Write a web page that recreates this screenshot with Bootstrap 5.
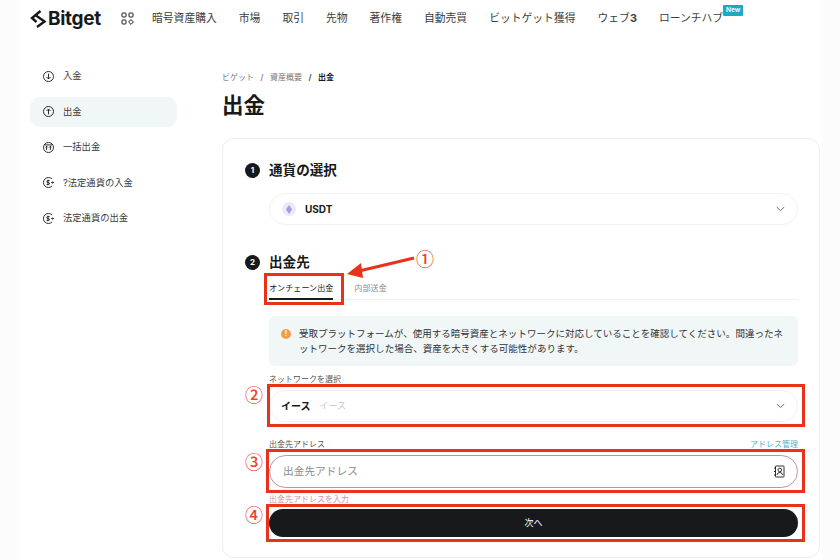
<!DOCTYPE html>
<html lang="ja">
<head>
<meta charset="utf-8">
<title>出金</title>
<link href="https://cdn.jsdelivr.net/npm/bootstrap@5.3.0/dist/css/bootstrap.min.css" rel="stylesheet">
<style>
html,body{height:560px;overflow:hidden}
body{background:#fcfcfc;color:#17191a;font-family:Inter,"Noto Sans CJK JP","Noto Sans",sans-serif;font-size:10px}
.page-frame{position:relative;width:804px;height:560px;margin-left:18px;background:#fff}
.top-bar{height:36px;padding:1px 0 0 12px;flex-wrap:nowrap;justify-content:flex-start}
.logo-wrap{display:flex;align-items:center;gap:1px;width:91px}
.logo-word{font-size:19px;font-weight:700;letter-spacing:-.3px;line-height:24px;color:#17191a}
.top-grid{margin-right:18px}
.top-links{gap:22px;flex-wrap:nowrap;position:relative}
.top-links .nav-link{padding:0;font-size:10.8px;line-height:14px;color:#3a3d40;white-space:nowrap;position:relative}
.new-tag{position:absolute;left:100%;top:-7px;width:20px;height:11px;background:#1fa8c4;color:#e8f7fa;font-size:6.5px;font-weight:700;line-height:11px;text-align:center;border-radius:1px}
.side-col{width:147px;margin:25px 0 0 12px;gap:5.5px}
.side-item{height:30px;padding:0 0 0 13px;gap:9px;border-radius:10px;font-size:9.3px;color:#3a3d40;white-space:nowrap}
.side-item.current{background:#f1f6f6}
.main-col{width:598px;margin-left:45px}
.crumbs{margin:35px 0 0;font-size:8px;line-height:12px;color:#777;--bs-breadcrumb-divider-color:#555;--bs-breadcrumb-item-padding-x:6.5px}
.crumbs .breadcrumb-item.active{color:#17191a;font-weight:700}
.page-head{font-size:21.5px;font-weight:700;line-height:28px;margin:8px 0 19px;color:#17191a}
.panel{height:420px;border:1px solid #eeeeee;border-radius:12px;padding:21px 21px 0 22px}
.step-row{height:20px;gap:9px;font-size:13.6px;font-weight:700;line-height:20px}
.step-dot{width:15px;height:15px;border-radius:50%;background:#17191a;color:#fff;font-size:8px;font-weight:700;line-height:15px;text-align:center}
.indent{margin-left:24px}
.pick-box{height:32px;border:1px solid #f1f1f1;border-radius:16px;padding:0 12px 0 11px;background:#fff}
.coin-dot{width:14px;height:14px;border-radius:50%;background:#ece9f8;margin:0 9px 0 1px}
.pick-name{font-size:10px;font-weight:700;color:#17191a}
.pick-sub{font-size:9px;color:#c4c6c8;margin-left:9px}
.gap-a{margin-top:13px}.gap-b{margin-top:27px}
.tab-row{height:28px;border-bottom:1px solid #f0f0f0;gap:21px;flex-wrap:nowrap}
.tab-row .nav-link{padding:10px 0 4px;font-size:8.1px;line-height:12px;color:#8a8d90;height:28px;border-radius:0}
.tab-row .nav-link.active{color:#17191a;border-bottom:2px solid #17191a}
.tip-box{margin:16px 0 0;height:50px;padding:10px 12px;gap:8px;background:#f1f6f6;border:0;border-radius:6px;font-size:9.53px;line-height:15px;color:#2f3236;white-space:nowrap}
.tip-dot{width:10px;height:10px;border-radius:50%;background:#f0a04b;color:#fff;font-size:7px;font-weight:700;line-height:10px;text-align:center;margin-top:3px;flex:none}
.field-label{font-size:8px;line-height:12px;color:#555;margin:0}
.mt-7px{margin-top:7px}.mt-5px{margin-top:5px}.mt-16px{margin-top:16px}
.teal-link{color:#52b4c8;text-decoration:none;font-size:8px;line-height:12px}
.addr-wrap{height:33px;margin-top:5px;position:relative}
.addr-input{height:33px;border:1px solid #c68fa0;border-radius:17px;padding:0 36px 0 13px;font-size:10.7px;color:#17191a;box-shadow:none}
.addr-input::placeholder{color:#8a8d90;opacity:1}
.addr-icon{position:absolute;right:13px;top:10px}
.err-line{font-size:8px;line-height:12px;color:#d98ea6;margin:5px 0 0}
.next-btn{height:28px;margin-top:4px;padding:0;border:0;border-radius:14px;background:#17191a;color:#fff;font-size:9px;line-height:28px}
.mark-frame{position:absolute;border:3px solid #e8321a}
.mark-num{position:absolute;color:#e8452c;font-family:"Noto Sans CJK JP",sans-serif;font-size:18px;font-weight:500;line-height:20px;width:20px;text-align:center}
.mark-arrow{position:absolute;left:326px;top:250px}
</style>
</head>
<body>
<div class="page-frame">
  <nav class="navbar top-bar">
    <a class="logo-wrap text-decoration-none" href="#">
      <svg width="17" height="18" viewBox="0 0 17 18" fill="none" stroke="#17191a" stroke-width="2.4" aria-hidden="true"><path d="M10.5 1 L2 8 L6.5 12"/><path d="M6 5.5 L14.5 11.5 L7 17"/></svg>
      <span class="logo-word">Bitget</span>
    </a>
    <svg class="top-grid" width="13" height="13" viewBox="0 0 13 13" fill="none" stroke="#17191a" stroke-width="1" aria-hidden="true"><rect x="1" y="1" width="4" height="4" rx=".8"/><rect x="8" y="1" width="4" height="4" rx=".8"/><rect x="1" y="8" width="4" height="4" rx=".8"/><path d="M10 7.6 L12.4 10 L10 12.4 L7.6 10 Z"/></svg>
    <div class="nav top-links">
      <a class="nav-link" href="#">暗号資産購入</a>
      <a class="nav-link" href="#">市場</a>
      <a class="nav-link" href="#">取引</a>
      <a class="nav-link" href="#">先物</a>
      <a class="nav-link" href="#">著作権</a>
      <a class="nav-link" href="#">自動売買</a>
      <a class="nav-link" href="#">ビットゲット獲得</a>
      <a class="nav-link" href="#">ウェブ<span class="fw-bold">3</span></a>
      <a class="nav-link" href="#">ローンチハブ<span class="new-tag">New</span></a>
    </div>
  </nav>
  <div class="d-flex">
    <aside class="side-col d-flex flex-column">
      <div class="side-item d-flex align-items-center">
        <svg width="11" height="11" viewBox="0 0 11 11" fill="none" stroke="#17191a" stroke-width=".9"><circle cx="5.5" cy="5.5" r="5"/><path d="M5.5 2.6V8M3.5 6 5.5 8 7.5 6"/></svg><span>入金</span></div>
      <div class="side-item current d-flex align-items-center">
        <svg width="11" height="11" viewBox="0 0 11 11" fill="none" stroke="#17191a" stroke-width=".9"><circle cx="5.5" cy="5.5" r="5"/><path d="M5.5 8.4V3M3.5 5 5.5 3 7.5 5"/></svg><span>出金</span></div>
      <div class="side-item d-flex align-items-center">
        <svg width="11" height="11" viewBox="0 0 11 11" fill="none" stroke="#17191a" stroke-width=".9"><circle cx="5.5" cy="5.5" r="5"/><path d="M1.5 2.9H9.5M3.6 8V4.2M2.4 5.4 3.6 4.2 4.8 5.4M7.4 8V4.2M6.2 5.4 7.4 4.2 8.6 5.4"/></svg><span>一括出金</span></div>
      <div class="side-item d-flex align-items-center">
        <svg width="11" height="11" viewBox="0 0 11 11" fill="none" stroke="#17191a" stroke-width=".9"><path d="M9 2A5 5 0 1 0 9 9"/><path d="M6.6 3.6H4.6Q3.8 3.6 3.8 4.5T4.6 5.5H5.6Q6.4 5.5 6.4 6.5T5.6 7.4H3.6M5 2.7V8.3M8.2 5.5H10.6M9.6 4.5 10.6 5.5 9.6 6.5"/></svg><span>?法定通貨の入金</span></div>
      <div class="side-item d-flex align-items-center">
        <svg width="11" height="11" viewBox="0 0 11 11" fill="none" stroke="#17191a" stroke-width=".9"><path d="M9 2A5 5 0 1 0 9 9"/><path d="M6.6 3.6H4.6Q3.8 3.6 3.8 4.5T4.6 5.5H5.6Q6.4 5.5 6.4 6.5T5.6 7.4H3.6M5 2.7V8.3M8.2 5.5H10.6M9.6 4.5 10.6 5.5 9.6 6.5"/></svg><span>法定通貨の出金</span></div>
    </aside>
    <main class="main-col">
      <nav aria-label="breadcrumb">
        <ol class="breadcrumb crumbs">
          <li class="breadcrumb-item">ビゲット</li>
          <li class="breadcrumb-item">資産概要</li>
          <li class="breadcrumb-item active" aria-current="page">出金</li>
        </ol>
      </nav>
      <h1 class="page-head">出金</h1>
      <section class="card panel">
        <div class="step-row d-flex align-items-center"><span class="step-dot">1</span><span>通貨の選択</span></div>
        <div class="indent">
          <div class="pick-box gap-a d-flex align-items-center">
            <span class="coin-dot d-flex align-items-center justify-content-center"><svg width="6" height="9" viewBox="0 0 6 9"><path d="M3 0 6 4.4 3 9 0 4.4Z" fill="#a79be0"/></svg></span>
            <span class="pick-name">USDT</span>
            <svg class="ms-auto" width="9" height="6" viewBox="0 0 9 6" fill="none" stroke="#55585b" stroke-width=".9"><path d="M.8 1 4.5 4.6 8.2 1"/></svg>
          </div>
        </div>
        <div class="step-row gap-b d-flex align-items-center"><span class="step-dot">2</span><span>出金先</span></div>
        <div class="indent">
          <div class="nav tab-row">
            <a class="nav-link active" href="#">オンチェーン出金</a>
            <a class="nav-link" href="#">内部送金</a>
          </div>
          <div class="alert tip-box d-flex" role="alert">
            <span class="tip-dot">!</span>
            <span>受取プラットフォームが、使用する暗号資産とネットワークに対応していることを確認してください。間違ったネ<br>ットワークを選択した場合、資産を大きくする可能性があります。</span>
          </div>
          <p class="field-label mt-7px">ネットワークを選択</p>
          <div class="pick-box mt-5px d-flex align-items-center">
            <span class="pick-name">イース</span><span class="pick-sub">イース</span>
            <svg class="ms-auto" width="9" height="6" viewBox="0 0 9 6" fill="none" stroke="#55585b" stroke-width=".9"><path d="M.8 1 4.5 4.6 8.2 1"/></svg>
          </div>
          <div class="d-flex justify-content-between mt-16px">
            <span class="field-label">出金先アドレス</span>
            <a class="teal-link" href="#">アドレス管理</a>
          </div>
          <div class="addr-wrap">
            <input class="form-control addr-input" type="text" placeholder="出金先アドレス" aria-label="出金先アドレス">
            <svg class="addr-icon" width="12" height="13" viewBox="0 0 12 13" fill="none" stroke="#17191a" stroke-width=".9"><rect x="2.5" y="1" width="8.5" height="11" rx=".6"/><circle cx="6.8" cy="5" r="1.8"/><path d="M4 10Q4.5 7.4 6.8 7.4T9.6 10M1 3H3M1 6.5H3M1 10H3"/></svg>
          </div>
          <p class="err-line">出金先アドレスを入力</p>
          <button class="btn next-btn w-100" type="button">次へ</button>
        </div>
      </section>
    </main>
  </div>
  <!-- annotations lying over the page -->
  <div class="mark-frame" style="left:246px;top:273px;width:80px;height:32px"></div>
  <div class="mark-frame" style="left:249px;top:384px;width:538px;height:43px"></div>
  <div class="mark-frame" style="left:248px;top:449px;width:539px;height:44px"></div>
  <div class="mark-frame" style="left:248px;top:504px;width:539px;height:38px"></div>
  <svg class="mark-arrow" width="72" height="30" viewBox="0 0 72 30" aria-hidden="true"><path d="M70 8 L15 21" stroke="#e8321a" stroke-width="3"/><path d="M3 24 L17 13 L19 28 Z" fill="#e8321a"/></svg>
  <span class="mark-num" style="left:397px;top:248px">①</span>
  <span class="mark-num" style="left:226px;top:384px">②</span>
  <span class="mark-num" style="left:226px;top:451px">③</span>
  <span class="mark-num" style="left:226px;top:504px">④</span>
</div>
<script src="https://cdn.jsdelivr.net/npm/bootstrap@5.3.0/dist/js/bootstrap.bundle.min.js"></script>
</body>
</html>
